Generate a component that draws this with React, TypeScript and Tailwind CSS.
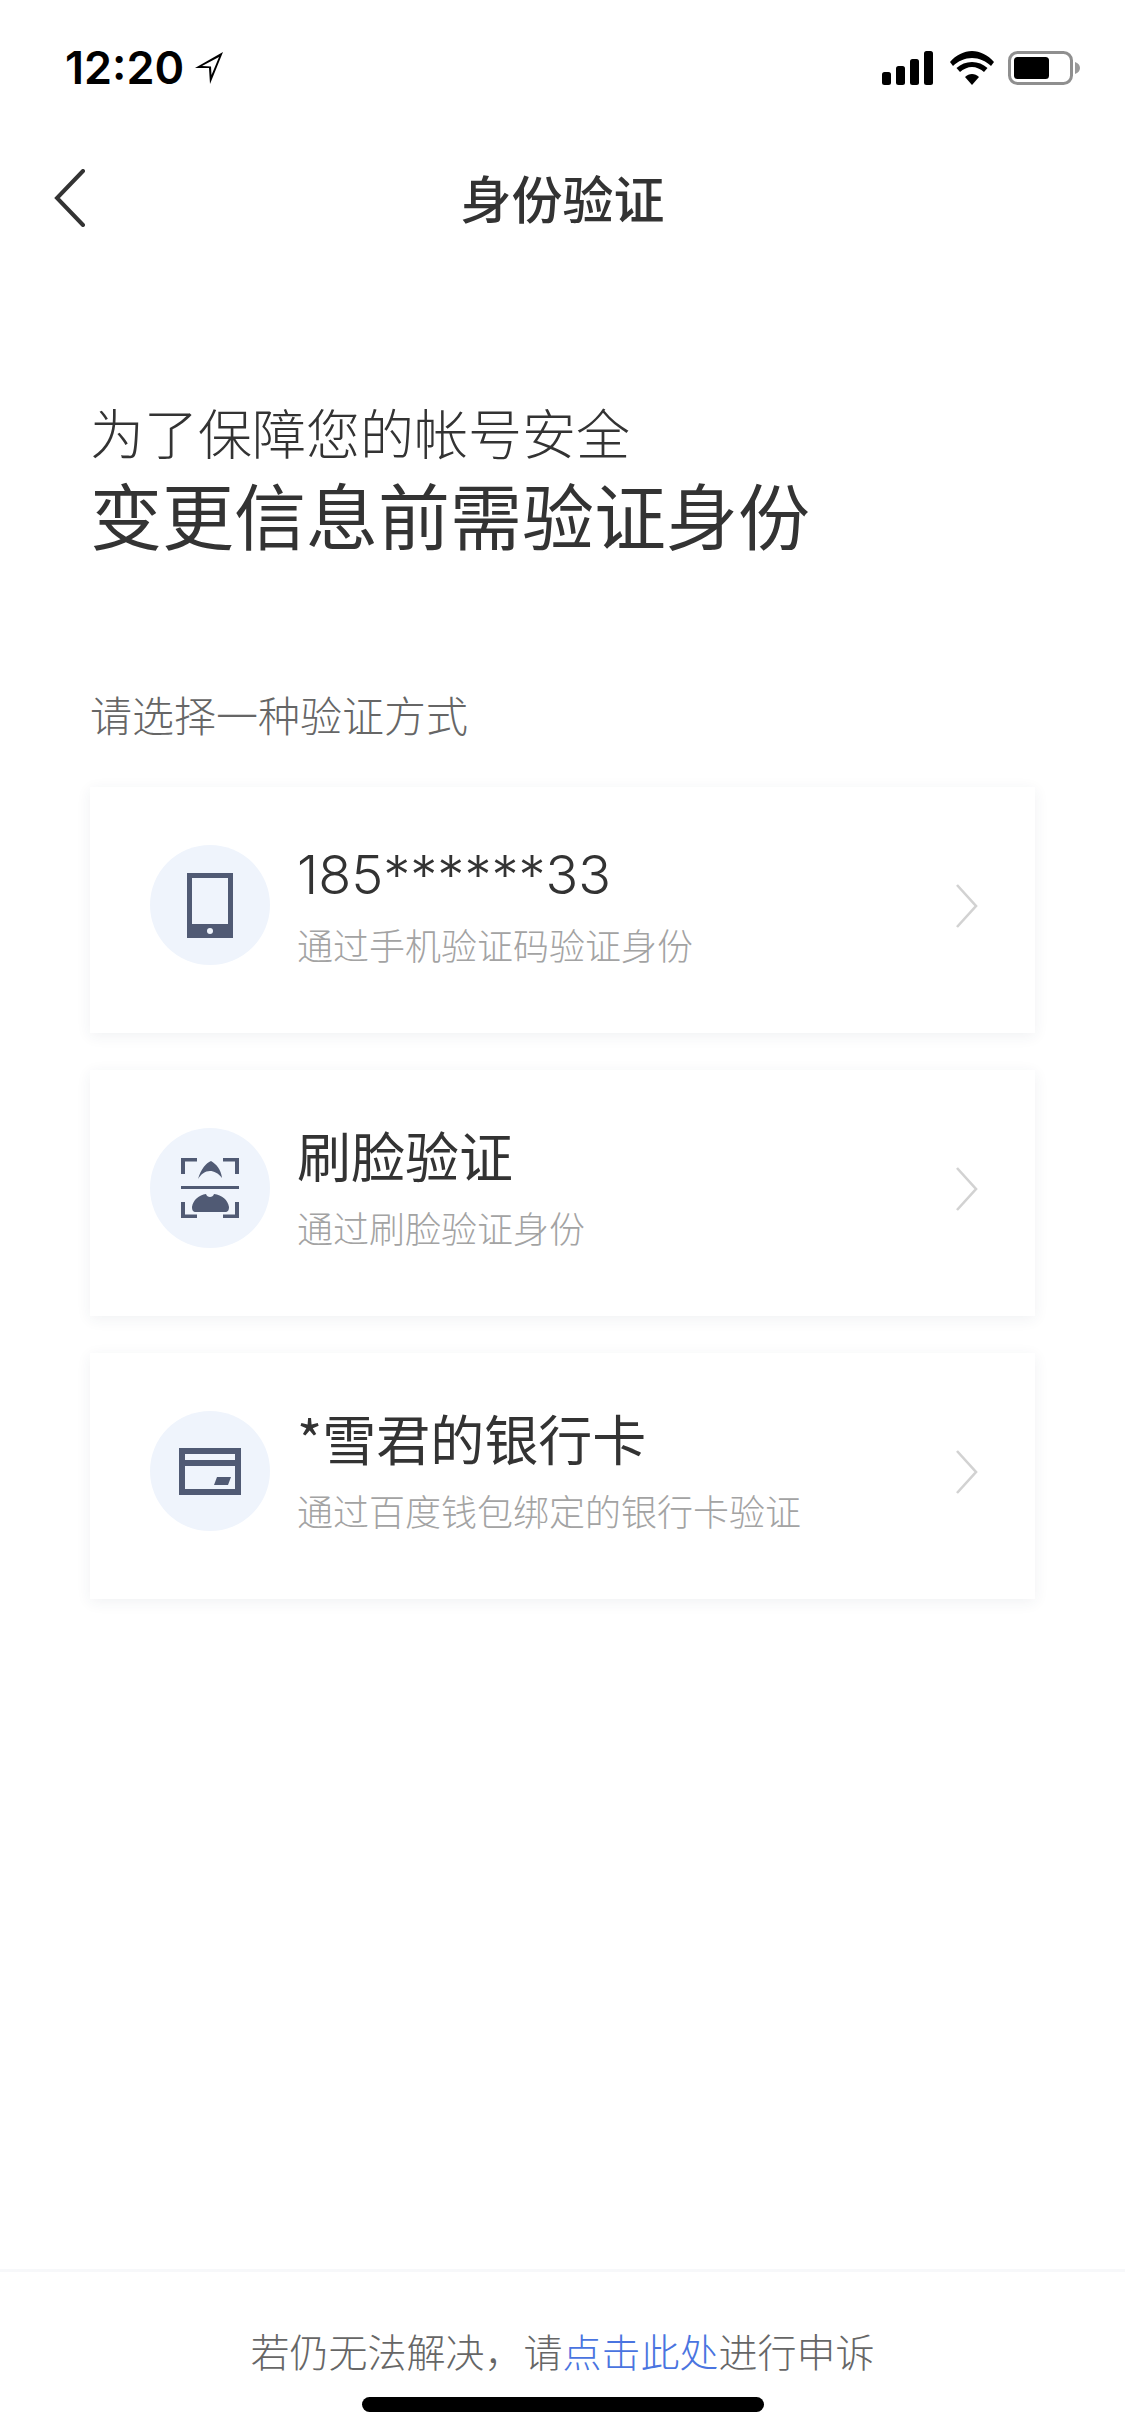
const cjk = "font-['Noto_Sans_CJK_SC','Noto_Sans',sans-serif]";

function Chevron() {
  return (
    <svg width="24" height="46" viewBox="0 0 24 46" className="mb-[8px] shrink-0" fill="none">
      <path d="M2 2 L21 23 L2 44" stroke="#d2d2d2" strokeWidth="2.6" />
    </svg>
  );
}

function PhoneIcon() {
  return (
    <svg width="46" height="65" viewBox="0 0 46 65">
      <path fillRule="evenodd" d="M0 0H46V65H0Z M5 5V51H41V5Z" fill="#505a74" />
      <circle cx="23" cy="58" r="3" fill="#eff4fc" />
    </svg>
  );
}

function FaceIcon() {
  return (
    <svg width="58" height="60" viewBox="0 0 58 60" fill="#505a74">
      <path d="M0 16V0H16V3.5H4V16Z M42 0H58V16H54V3.5H42Z M0 44H4V56.5H16V60H0Z M54 44H58V60H42V56.5H54Z" />
      <path d="M17 21C20 11 25 5 30 3C35 6 40 11 41 20C37 15 33 13 29 13C24 13 20 16 17 21Z" />
      <rect x="0" y="28" width="58" height="3" />
      <path d="M15 54C12 54 11 52 11 49C12 42 18 37 25 36C26 40 32 40 33 36C41 37 47 42 48 49C48 52 47 54 44 54Z" />
    </svg>
  );
}

function CardIcon() {
  return (
    <svg width="62" height="47" viewBox="0 0 62 47">
      <path fillRule="evenodd" d="M0 0H62V47H0Z M6 6V12H56V6Z M6 18V41H56V18Z" fill="#505a74" />
      <path d="M38 29H52L49 37H35Z" fill="#505a74" />
    </svg>
  );
}

function Card({ icon, title, sub, titleClass }: { icon: React.ReactNode; title: string; sub: string; titleClass: string }) {
  return (
    <div className="flex h-[246px] items-center bg-white pl-[60px] pr-[56px] shadow-[0_3px_14px_rgba(40,50,80,0.07)]">
      <div className="mb-[10px] flex h-[120px] w-[120px] shrink-0 items-center justify-center rounded-full bg-[#eff4fc]">
        {icon}
      </div>
      <div className="mb-[14px] ml-[27px] flex flex-1 flex-col">
        <div className={`h-[64px] text-[#333333] ${titleClass}`}>{title}</div>
        <div className="mt-[18px] h-[44px] text-[36px] font-light leading-[44px] text-[#a3a3a3]">{sub}</div>
      </div>
      <Chevron />
    </div>
  );
}

export default function App() {
  return (
    <div className={`flex h-[2436px] w-[1125px] flex-col overflow-hidden bg-white ${cjk}`}>
      {/* status bar */}
      <div className="flex h-[132px] items-start justify-between pl-[65px] pr-[45px] pt-[44px]">
        <div className="flex items-center">
          <span className="font-['Inter',sans-serif] text-[45px] font-semibold leading-[48px] text-black">12:20</span>
          <svg className="ml-[10px]" width="30" height="34" viewBox="0 0 30 34">
            <path d="M29 1L16 33L15 17L1 17Z M25 6L8 15L17 15.5L17.5 24Z" fill="#000" fillRule="evenodd" />
          </svg>
        </div>
        <div className="flex items-center pt-[7px]">
          <svg width="52" height="34" viewBox="0 0 52 34" fill="#000">
            <rect x="0" y="21" width="9" height="13" rx="2.5" />
            <rect x="14" y="15" width="9" height="19" rx="2.5" />
            <rect x="28" y="8" width="9" height="26" rx="2.5" />
            <rect x="42" y="0" width="9" height="34" rx="2.5" />
          </svg>
          <svg className="ml-[16px]" width="44" height="34" viewBox="0 0 44 34" fill="#000">
            <path d="M22 34L15 26C19 22 25 22 29 26Z" />
            <path d="M22 7C29 7 36 10 41 15L44 11C38 4 30 0 22 0C14 0 6 4 0 11L3 15C8 10 15 7 22 7Z" />
            <path d="M22 16C26 16 31 18 34 21L37.5 17C33 13 28 11 22 11C16 11 11 13 6.5 17L10 21C13 18 18 16 22 16Z" />
          </svg>
          <svg className="ml-[14px]" width="72" height="34" viewBox="0 0 72 34">
            <rect x="1.5" y="1.5" width="62" height="31" rx="8" fill="none" stroke="#8f8f8f" strokeWidth="3" />
            <rect x="6" y="6" width="35" height="22" rx="3.5" fill="#000" />
            <path d="M67 11C70 12 72 14 72 17C72 20 70 22 67 23Z" fill="#9a9a9a" />
          </svg>
        </div>
      </div>

      {/* nav */}
      <div className="relative flex h-[132px] items-center justify-center">
        <svg className="absolute left-[54px] top-[37px]" width="32" height="58" viewBox="0 0 32 58" fill="none">
          <path d="M29 2L3 29L29 56" stroke="#333333" strokeWidth="4" strokeLinecap="round" />
        </svg>
        <span className="mb-[3px] text-[51px] font-medium leading-[68px] text-[#333333]">身份验证</span>
      </div>

      {/* main */}
      <div className="flex flex-1 flex-col px-[90px]">
        <div className="mt-[128px] text-[54px] font-light leading-[80px] text-[#333333]">为了保障您的帐号安全</div>
        <div className="mt-[1px] text-[72px] font-normal leading-[80px] text-[#333333]">变更信息前需验证身份</div>
        <div className="mt-[131px] text-[42px] font-light leading-[60px] text-[#666666]">请选择一种验证方式</div>
        <div className="mt-[43px] flex flex-col gap-[37px]">
          <Card icon={<PhoneIcon />} title="185******33" titleClass="font-['Inter',sans-serif] text-[54px] font-light leading-[69px]" sub="通过手机验证码验证身份" />
          <Card icon={<FaceIcon />} title="刷脸验证" titleClass="text-[54px] font-normal leading-[64px]" sub="通过刷脸验证身份" />
          <Card icon={<CardIcon />} title="*雪君的银行卡" titleClass="text-[54px] font-normal leading-[64px]" sub="通过百度钱包绑定的银行卡验证" />
        </div>
      </div>

      {/* footer */}
      <div className="flex h-[167px] flex-col items-center border-t-[3px] border-[#f7f8fa]">
        <div className="mt-[51px] text-[39px] font-light leading-[54px] text-[#666666]">
          若仍无法解决，请<span className="text-[#4a74e0]">点击此处</span>进行申诉
        </div>
        <div className="mt-[20px] h-[15px] w-[402px] rounded-full bg-black" />
      </div>
    </div>
  );
}
